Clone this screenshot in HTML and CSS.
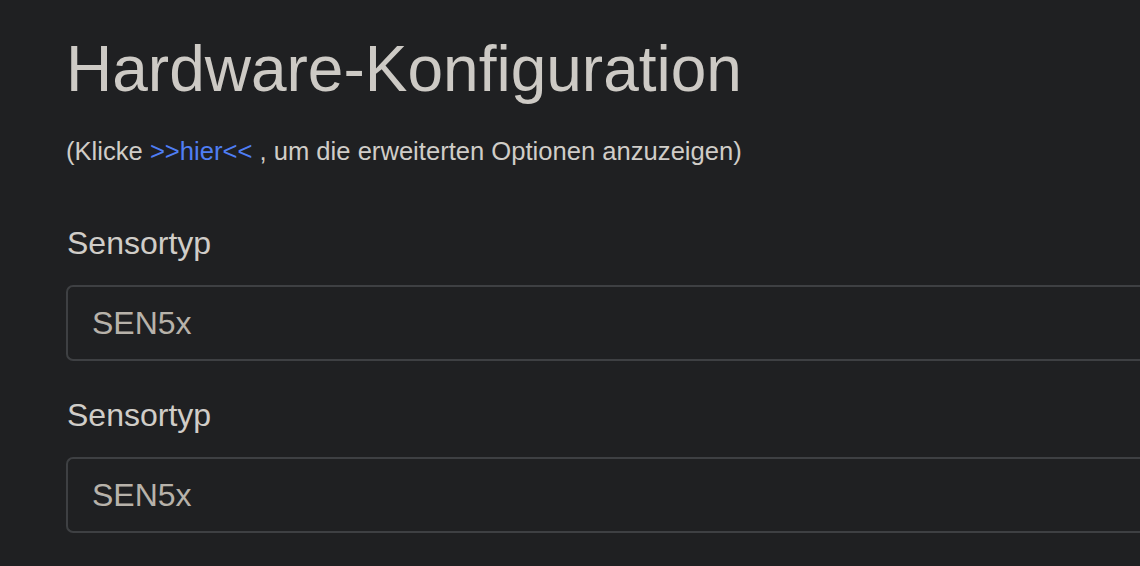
FILE: index.html
```html
<!DOCTYPE html>
<html lang="de">
<head>
<meta charset="utf-8">
<title>Hardware-Konfiguration</title>
<link rel="stylesheet" href="styles.css">
</head>
<body>
<main class="page">
  <h1 class="title">Hardware-Konfiguration</h1>
  <p class="hint">(Klicke <a class="link" href="#">&gt;&gt;hier&lt;&lt;</a> , um die erweiterten Optionen anzuzeigen)</p>
  <div class="group">
    <label class="label">Sensortyp</label>
    <div class="field">SEN5x</div>
  </div>
  <div class="group">
    <label class="label">Sensortyp</label>
    <div class="field">SEN5x</div>
  </div>
</main>
</body>
</html>
```
FILE: styles.css
```css
html, body {
  margin: 0;
  padding: 0;
  background: #1f2022;
  overflow: hidden;
}
body {
  font-family: "Liberation Sans", Arial, sans-serif;
  color: #cfccc7;
}
.page {
  box-sizing: border-box;
  width: 100%;
  padding: 31px 0 0 66px;
  display: flex;
  flex-direction: column;
}
.title {
  margin: 0 0 24px 0;
  font-size: 64px;
  line-height: 76.8px;
  font-weight: 400;
  color: #cdcac5;
}
.hint {
  margin: 0;
  font-size: 25.6px;
  line-height: 38.4px;
  color: #d0cdc8;
}
.link {
  color: #4f7ef4;
  text-decoration: none;
}
.group {
  display: flex;
  flex-direction: column;
  gap: 18px;
}
.group:first-of-type {
  margin-top: 49px;
}
.group + .group {
  margin-top: 30px;
}
.label {
  font-size: 32px;
  line-height: 48px;
  color: #d0cdc8;
  padding-left: 1px;
}
.field {
  box-sizing: border-box;
  height: 76px;
  border: 2px solid #3e4043;
  border-right: none;
  border-radius: 7px 0 0 7px;
  padding: 12px 24px;
  font-size: 32px;
  line-height: 48px;
  color: #b7b2aa;
  background: #1f2022;
}
```
